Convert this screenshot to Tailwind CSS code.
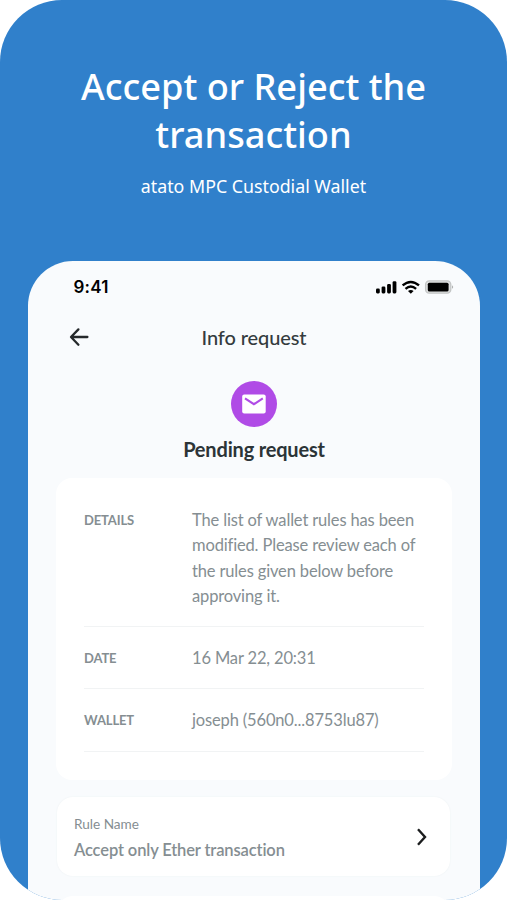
<!DOCTYPE html>
<html lang="en">
<head>
<meta charset="utf-8">
<title>Info request</title>
<script src="https://cdn.jsdelivr.net/npm/@tailwindcss/browser@4"></script>
</head>
<body class="bg-white">
<main class="h-[900px] w-[507px] overflow-hidden rounded-[62px] bg-[#3080cb]">
  <header class="flex h-[261px] flex-col items-center pt-[62px] text-center font-['Noto_Sans',sans-serif] text-white">
    <h1 class="w-[400px] text-[36.2px] leading-[48px] font-medium">Accept or Reject the transaction</h1>
    <p class="mt-[15px] text-[17.8px] leading-[26px] whitespace-nowrap">atato MPC Custodial Wallet</p>
  </header>
  <section class="ml-[28px] h-[639px] w-[452px] rounded-t-[45px] bg-[#f9fbfd] font-['Lato',sans-serif] text-[#858e92]">
    <div class="flex h-[52px] items-center justify-between pr-[26px] pl-[45.5px]">
      <span class="relative top-px font-['Inter',sans-serif] text-[17px] tracking-[0.2px] font-semibold text-black">9:41</span>
      <svg width="78" height="14" viewBox="0 0 78 14">
        <g fill="#000">
          <rect x="0" y="8.6" width="3.8" height="4.8" rx="1.3"/>
          <rect x="5.6" y="6.5" width="3.8" height="6.9" rx="1.3"/>
          <rect x="11.1" y="3.9" width="3.8" height="9.5" rx="1.3"/>
          <rect x="16.6" y="1.2" width="3.8" height="12.2" rx="1.3"/>
        </g>
        <g fill="none" stroke="#000" stroke-width="2.4">
          <path d="M26.6 5.4Q34.8-1.6 43 5.4"/>
          <path d="M29.5 8.8Q34.8 4.2 40.1 8.8"/>
        </g>
        <path d="M32 11Q34.8 9 37.6 11L34.8 13.7Z"/>
        <rect x="49.6" y="0.9" width="25.2" height="12.3" rx="3.6" fill="#dfe0e0" stroke="#c3c5c5" stroke-width="1.3"/>
        <rect x="51.8" y="2.7" width="20.8" height="8.8" rx="1.6"/>
        <path d="M76 5.2Q78.4 7 76 8.8Z" fill="#b0b2b2"/>
      </svg>
    </div>
    <div class="relative flex h-[50px] items-center justify-center">
      <svg class="absolute top-[14px] left-[41px]" width="21" height="21" viewBox="0 0 21 21" fill="none" stroke="#25292b" stroke-width="2.3" stroke-linecap="round" stroke-linejoin="round"><path d="M18.4 10H2.2M9.4 2.4L2 10l7.4 7.7"/></svg>
      <h2 class="relative -top-px text-[20px] leading-[24px] tracking-[-0.1px] font-medium text-[#343b3e]">Info request</h2>
    </div>
    <div class="flex flex-col items-center pt-[18px]">
      <div class="flex size-[46px] items-center justify-center rounded-full bg-[#b04be6]">
        <svg width="24" height="20" viewBox="0 0 24 20"><rect width="23.5" height="19" x=".2" y=".5" rx="2" fill="#fff"/><path d="M3 4.4l8.9 5.8 8.9-5.8" fill="none" stroke="#b04be6" stroke-width="2.1"/></svg>
      </div>
      <h3 class="mt-[9px] text-[20px] leading-[26px] tracking-[-0.18px] font-bold text-[#2c3437]">Pending request</h3>
    </div>
    <div class="mt-[16px] ml-[28px] h-[302px] w-[396px] rounded-[16px] bg-white px-[28px] pt-[29px] text-[16.5px] leading-[25.3px] tracking-[-0.15px]">
      <dl class="w-[340px]">
        <div class="flex h-[120px] border-b border-[#f1f3f4]">
          <dt class="w-[108px] pt-px text-[13px] font-bold">DETAILS</dt>
          <dd class="pt-px whitespace-nowrap">The list of wallet rules has been<br>modified. Please review each of<br>the rules given below before<br>approving it.</dd>
        </div>
        <div class="flex h-[62px] items-center border-b border-[#f1f3f4] pt-[2px]">
          <dt class="w-[108px] pt-px text-[13px] font-bold">DATE</dt>
          <dd>16 Mar 22, 20:31</dd>
        </div>
        <div class="flex h-[63px] items-center border-b border-[#f1f3f4] pt-[2px]">
          <dt class="w-[108px] text-[13px] font-bold">WALLET</dt>
          <dd>joseph (560n0...8753lu87)</dd>
        </div>
      </dl>
    </div>
    <div class="mt-[17px] ml-[29px] flex h-[79px] w-[393px] items-center justify-between rounded-[16px] bg-white pr-[22px] pl-[17px] shadow-[0_0_2px_#edf1f3]">
      <div class="pt-[3px]">
        <p class="text-[13.6px] leading-[20px]">Rule Name</p>
        <p class="mt-[4px] text-[16.5px] leading-[24px] tracking-[-0.13px] font-semibold">Accept only Ether transaction</p>
      </div>
      <svg width="12" height="18" viewBox="0 0 12 18" fill="none" stroke="#1b1d1e" stroke-width="2.4"><path d="M2 1.3l7 7.7-7 7.7"/></svg>
    </div>
    <div class="mt-[20px] ml-[29px] h-[79px] w-[393px] rounded-[16px] bg-white"></div>
  </section>
</main>
</body>
</html>
